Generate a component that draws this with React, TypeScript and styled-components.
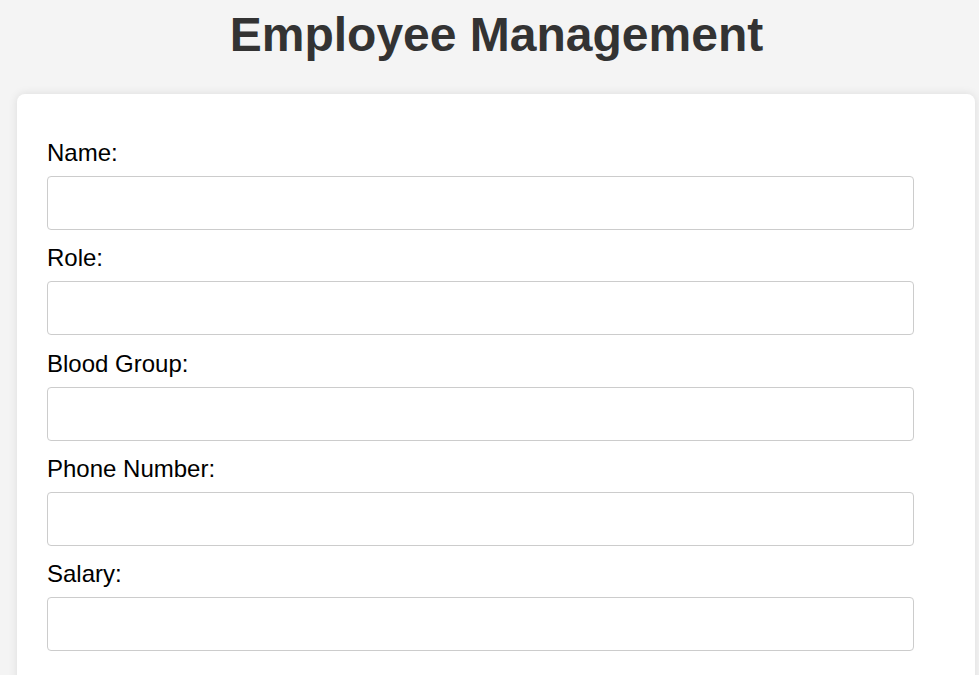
import React from "react";
import styled, { createGlobalStyle } from "styled-components";

const GlobalStyle = createGlobalStyle`
  html, body {
    margin: 0;
    padding: 0;
    background: #f4f4f4;
    font-family: "Liberation Sans", Arial, sans-serif;
  }
  * { box-sizing: border-box; }
`;

const Page = styled.div`
  padding: 7px 4px 40px 18px;
`;

const Title = styled.h1`
  margin: 0 0 32px;
  font-size: 48px;
  font-weight: 700;
  line-height: 55px;
  color: #333;
  text-align: center;
`;

const Card = styled.div`
  background: #fff;
  border-radius: 8px;
  box-shadow: 0 0 10px rgba(0, 0, 0, 0.1);
  margin-left: -1px;
  padding: 45px 61px 30px 30px;
`;

const Form = styled.form`
  display: flex;
  flex-direction: column;
`;

const Field = styled.div`
  display: flex;
  flex-direction: column;
  margin-bottom: 14.25px;
`;

const Label = styled.label`
  font-size: 24px;
  line-height: 28px;
  color: #000;
  margin-bottom: 9px;
`;

const Input = styled.input`
  width: 100%;
  height: 54px;
  padding: 10px 15px;
  border: 1px solid #ccc;
  border-radius: 4px;
  font-size: 18px;
  font-family: inherit;
  background: #fff;
  outline: none;
`;

const fields = [
  { id: "name", label: "Name:" },
  { id: "role", label: "Role:" },
  { id: "blood", label: "Blood Group:" },
  { id: "phone", label: "Phone Number:" },
  { id: "salary", label: "Salary:" },
];

export default function App() {
  return (
    <>
      <GlobalStyle />
      <Page>
        <Title>Employee Management</Title>
        <Card>
          <Form onSubmit={(e) => e.preventDefault()}>
            {fields.map((f) => (
              <Field key={f.id}>
                <Label htmlFor={f.id}>{f.label}</Label>
                <Input id={f.id} type="text" />
              </Field>
            ))}
          </Form>
        </Card>
      </Page>
    </>
  );
}
